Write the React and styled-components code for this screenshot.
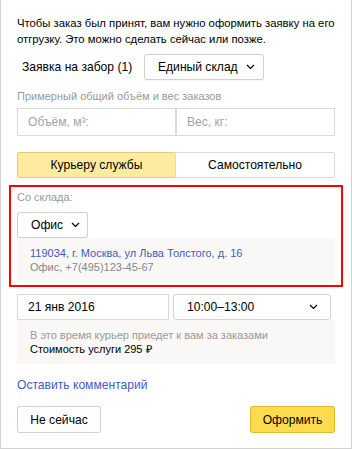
import React from "react";
import styled, { createGlobalStyle } from "styled-components";

const Global = createGlobalStyle`
  html, body { margin: 0; padding: 0; background: #fff; }
  body { font-family: "Liberation Sans", Arial, sans-serif; color: #000; }
  * { box-sizing: border-box; }
`;

const CONTROL = "12.1px";
const SMALL = "11px";

const Panel = styled.div`
  width: 352px;
  height: 449px;
  border: 1px solid #d2d2d2;
  border-top: none;
  padding: 15px 17px 0 16px;
  display: flex;
  flex-direction: column;
`;

const Para = styled.p`
  margin: 0;
  font-size: 11.3px;
  line-height: 16px;
  width: 330px;
  white-space: nowrap;
`;

const Row = styled.div`
  display: flex;
  align-items: center;
  margin-top: ${(p) => p.$mt || 0}px;
`;

const Label = styled.span`
  font-size: ${CONTROL};
  padding-left: 5px;
  width: 127px;
  white-space: nowrap;
`;

const Chevron = () => (
  <svg width="9" height="6" viewBox="0 0 9 6" style={{ display: "block", flexShrink: 0 }}>
    <path d="M1 1 L4.5 4.5 L8 1" fill="none" stroke="#000" strokeWidth="1.2" />
  </svg>
);

const SelectButton = styled.button`
  height: 26px;
  padding: 0 11px 0 13px;
  border: 1px solid rgba(0, 0, 0, 0.18);
  border-radius: 3px;
  background: #fff;
  font-family: inherit;
  font-size: ${CONTROL};
  color: #000;
  display: flex;
  align-items: center;
  justify-content: space-between;
  gap: 8px;
  white-space: nowrap;
  flex-shrink: 0;
  width: ${(p) => p.$w}px;
  box-shadow: 0 1px 1px rgba(0, 0, 0, 0.04);
`;

const Hint = styled.div`
  font-size: ${SMALL};
  line-height: 16px;
  color: #999;
  margin-top: ${(p) => p.$mt || 0}px;
`;

const Split = styled.div`
  display: grid;
  grid-template-columns: ${(p) => p.$cols};
  gap: ${(p) => p.$gap || 0}px;
  margin-top: ${(p) => p.$mt || 0}px;
  width: 318px;
`;

const Field = styled.div`
  height: ${(p) => p.$h || 28}px;
  border: 1px solid #d9d9d9;
  padding: 0 10px;
  display: flex;
  align-items: center;
  font-size: ${CONTROL};
  white-space: nowrap;
  color: ${(p) => (p.$placeholder ? "#a3a3a3" : "#000")};
  background: #fff;
`;

const Tab = styled.div`
  height: 26px;
  display: flex;
  align-items: center;
  justify-content: center;
  font-size: ${CONTROL};
  border: 1px solid ${(p) => (p.$active ? "rgba(160,130,30,0.3)" : "#d9d9d9")};
  background: ${(p) => (p.$active ? "#ffeba0" : "#fff")};
  border-radius: ${(p) => (p.$left ? "2px 0 0 2px" : "0 2px 2px 0")};
  ${(p) => (p.$left ? "border-right: none;" : "")}
`;

const Highlight = styled.div`
  margin: 7px -9px 0 -8px;
  border: 2px solid #ff0000;
  padding: 2px 7px 3px 6px;
  display: flex;
  flex-direction: column;
  align-items: flex-start;
`;

const InfoBox = styled.div`
  width: 318px;
  background: #f9f8f6;
  padding: 8px 13px;
  font-size: ${SMALL};
  line-height: 14px;
`;

const Line = styled.div`
  color: ${(p) => p.$color || "#000"};
  white-space: nowrap;
`;

const TimeSelect = styled.div`
  height: 26px;
  border: 1px solid rgba(0, 0, 0, 0.18);
  border-radius: 3px;
  padding: 0 12px 0 13px;
  display: flex;
  align-items: center;
  justify-content: space-between;
  font-size: ${CONTROL};
`;

const Link = styled.a`
  font-size: ${CONTROL};
  line-height: 16px;
  color: #3f5bc4;
  text-decoration: none;
  margin-top: 13px;
  align-self: flex-start;
`;

const Footer = styled.div`
  display: flex;
  justify-content: space-between;
  margin-top: 13px;
  width: 318px;
`;

const Button = styled.button`
  height: 27px;
  padding: 0;
  border-radius: 3px;
  border: 1px solid ${(p) => (p.$primary ? "rgba(190,150,0,0.45)" : "rgba(0,0,0,0.18)")};
  background: ${(p) => (p.$primary ? "#ffdb4d" : "#fff")};
  font-family: inherit;
  font-size: ${CONTROL};
  color: #000;
  white-space: nowrap;
  width: ${(p) => p.$w}px;
`;

export default function App() {
  return (
    <>
      <Global />
      <Panel>
        <Para>
          Чтобы заказ был принят, вам нужно оформить заявку на его
          <br />
          отгрузку. Это можно сделать сейчас или позже.
        </Para>
        <Row $mt={7}>
          <Label>Заявка на забор (1)</Label>
          <SelectButton $w={120}>
            Единый склад <Chevron />
          </SelectButton>
        </Row>
        <Hint $mt={8}>Примерный общий объём и вес заказов</Hint>
        <Split $cols="159px 159px" $mt={4}>
          <Field $placeholder>Объём, м³:</Field>
          <Field $placeholder>Вес, кг:</Field>
        </Split>
        <Split $cols="158px 160px" $mt={16}>
          <Tab $active $left>Курьеру службы</Tab>
          <Tab>Самостоятельно</Tab>
        </Split>
        <Highlight>
          <Hint $mt={0}>Со склада:</Hint>
          <Row $mt={7}>
            <SelectButton $w={71}>
              Офис <Chevron />
            </SelectButton>
          </Row>
          <InfoBox>
            <Line $color="#3f5bc4">119034, г. Москва, ул Льва Толстого, д. 16</Line>
            <Line $color="#888">Офис, +7(495)123-45-67</Line>
          </InfoBox>
        </Highlight>
        <Split $cols="152px 158px" $gap={4} $mt={7}>
          <Field $h={26}>21 янв 2016</Field>
          <TimeSelect>
            10:00–13:00 <Chevron />
          </TimeSelect>
        </Split>
        <InfoBox>
          <Line $color="#999">В это время курьер приедет к вам за заказами</Line>
          <Line>Стоимость услуги 295 ₽</Line>
        </InfoBox>
        <Link href="#">Оставить комментарий</Link>
        <Footer>
          <Button $w={84}>Не сейчас</Button>
          <Button $primary $w={85}>Оформить</Button>
        </Footer>
      </Panel>
    </>
  );
}
